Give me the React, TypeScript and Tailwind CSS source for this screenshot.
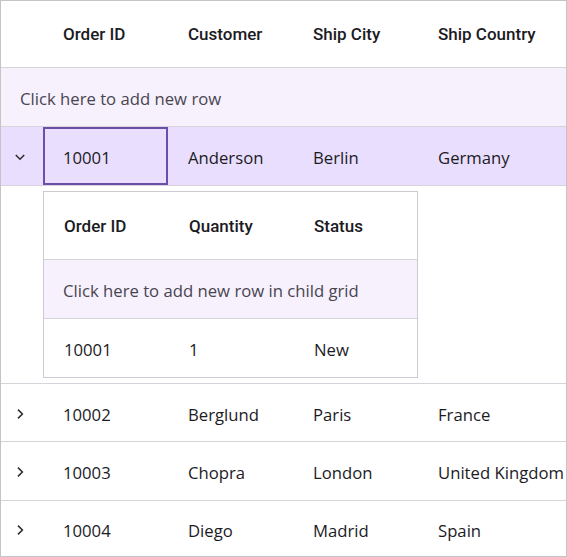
import React from "react";

type Order = { id: string; customer: string; city: string; country: string };

const orders: Order[] = [
  { id: "10001", customer: "Anderson", city: "Berlin", country: "Germany" },
  { id: "10002", customer: "Berglund", city: "Paris", country: "France" },
  { id: "10003", customer: "Chopra", city: "London", country: "United Kingdom" },
  { id: "10004", customer: "Diego", city: "Madrid", country: "Spain" },
];

// row heights include the 1px bottom border
const rowH = ["h-[59px]", "h-[58px]", "h-[59px]", "h-[56px]"];

const head = "font-['Roboto',sans-serif] font-medium text-[17px] text-[#1c1b1f] pt-[2px]";
const body = "font-['Segoe_UI','Open_Sans',sans-serif] text-[16.7px] text-[#1c1b1f] pt-[4px]";

function Chevron({ open }: { open: boolean }) {
  return (
    <svg
      width="12"
      height="12"
      viewBox="0 0 12 12"
      className={`text-[#2b2b2b] ${open ? "-translate-y-[1px]" : "-translate-y-[1px]"}`}
    >
      {open ? (
        <path d="M1.8 4 L6 8.2 L10.2 4" fill="none" stroke="currentColor" strokeWidth="1.5" />
      ) : (
        <path d="M4 1.6 L8.4 6 L4 10.4" fill="none" stroke="currentColor" strokeWidth="1.5" />
      )}
    </svg>
  );
}

function Cell({ children, className = "w-[125px] pl-[20px]" }: { children?: React.ReactNode; className?: string }) {
  return <div className={`flex shrink-0 items-center whitespace-nowrap ${className}`}>{children}</div>;
}

function ChildGrid() {
  return (
    <div className="w-[375px] border border-[#cdcbd1] bg-white">
      <div className={`flex h-[68px] border-b border-[#d6d4da] ${head}`}>
        <Cell>Order ID</Cell>
        <Cell>Quantity</Cell>
        <Cell>Status</Cell>
      </div>
      <div className={`flex h-[59px] items-center border-b border-[#d6d4da] bg-[#f6f1fd] pl-[19px] ${body} text-[#49454f]`}>
        Click here to add new row in child grid
      </div>
      <div className={`flex h-[58px] ${body}`}>
        <Cell>10001</Cell>
        <Cell>1</Cell>
        <Cell>New</Cell>
      </div>
    </div>
  );
}

export default function App() {
  return (
    <div className="h-[557px] w-[567px] overflow-hidden border border-[#c4c4c4] bg-white">
      <div className={`flex h-[67px] border-b border-[#d6d4da] ${head}`}>
        <div className="w-[42px] shrink-0" />
        <Cell>Order ID</Cell>
        <Cell>Customer</Cell>
        <Cell>Ship City</Cell>
        <Cell>Ship Country</Cell>
      </div>
      <div className={`flex h-[59px] items-center border-b border-[#d6d4da] bg-[#f6f1fd] pl-[19px] ${body} text-[#49454f]`}>
        Click here to add new row
      </div>
      {orders.map((o, i) => (
        <React.Fragment key={o.id}>
          <div
            className={`flex ${rowH[i]} ${i < 3 ? "border-b border-[#d6d4da]" : ""} ${i === 0 ? "bg-[#e9defe]" : "bg-white"} ${body}`}
          >
            <div className="flex w-[42px] shrink-0 items-center pl-[13px]">
              <Chevron open={i === 0} />
            </div>
            {i === 0 ? (
              <Cell className="-mt-[4px] h-[58px] w-[125px] border-2 border-[#6a4ea8] pl-[18px] pt-[4px]">{o.id}</Cell>
            ) : (
              <Cell>{o.id}</Cell>
            )}
            <Cell>{o.customer}</Cell>
            <Cell>{o.city}</Cell>
            <Cell>{o.country}</Cell>
          </div>
          {i === 0 && (
            <div className="flex h-[198px] items-start border-b border-[#d6d4da] pl-[42px] pt-[5px]">
              <ChildGrid />
            </div>
          )}
        </React.Fragment>
      ))}
    </div>
  );
}
